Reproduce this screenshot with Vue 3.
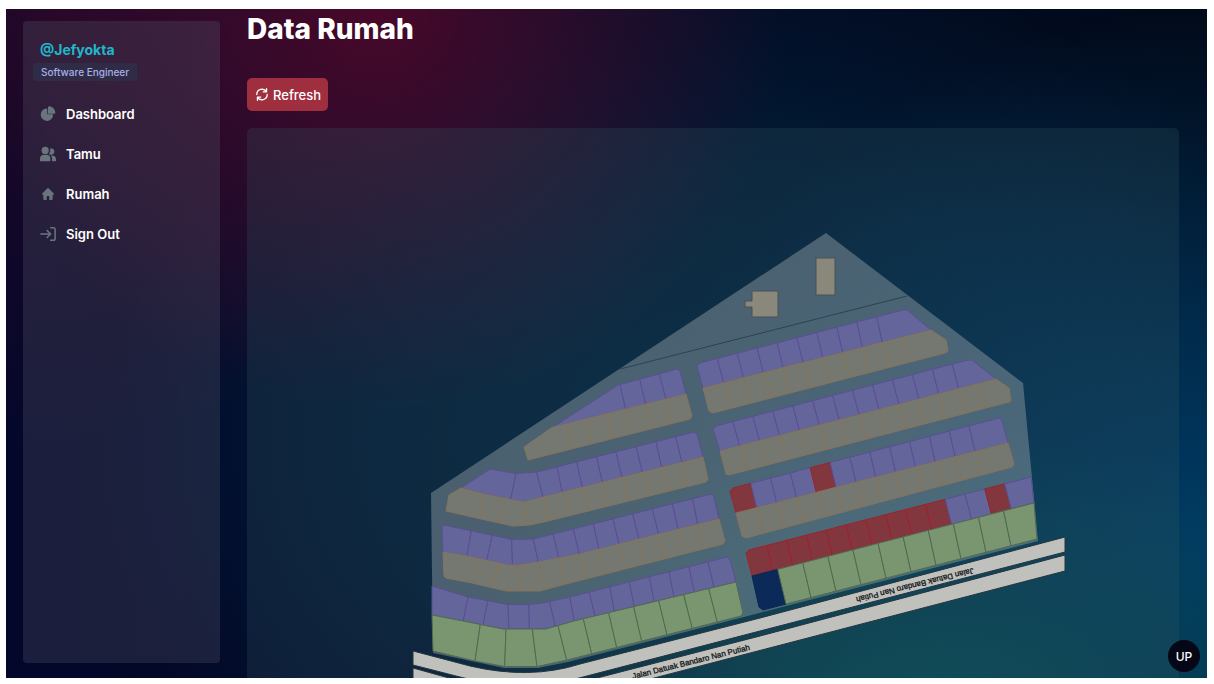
<script setup>
const menu = [
  { label: 'Dashboard', icon: 'pie' },
  { label: 'Tamu', icon: 'users' },
  { label: 'Rumah', icon: 'home' },
  { label: 'Sign Out', icon: 'exit' }
]

const roadName = 'Jalan Datuak Bandaro Nan Putiah'

const series = (start, step, count) => Array.from({ length: count }, (_, i) => start + step * i)

// Each strip is a row of houses between two edges, split at the x positions in cutsA (upper) and cutsB (lower).
const strips = [
  // east blocks
  { kind: 'violet', a: [[697, 366], [700, 363], [903, 310], [907, 310], [931, 330]], b: [[703, 388], [931, 330]], cutsA: series(717.3, 19.93, 9), cutsB: series(723.7, 19.83, 9) },
  { kind: 'sand', a: [[703, 388], [931, 330], [946, 340], [948, 351]], b: [[709, 411], [713, 413], [945, 353], [948, 351]], cutsA: series(724.7, 19.83, 10), cutsB: series(730.7, 19.78, 10) },
  { kind: 'violet', a: [[713, 429], [716, 426], [968, 360], [972, 360], [996, 379]], b: [[720, 451], [996, 379]], cutsA: series(733, 19.94, 12), cutsB: series(739.6, 19.92, 12) },
  { kind: 'sand', a: [[720, 451], [996, 379], [1009, 388], [1011, 401]], b: [[726, 474], [729, 475], [1009, 402], [1011, 401]], cutsA: series(741, 19.8, 13), cutsB: series(747, 19.8, 13) },
  { kind: 'violet', a: [[730, 491], [733, 488], [999, 418], [1002, 420]], b: [[736, 513], [1008, 443]], cutsA: series(750.7, 19.85, 12), cutsB: series(756.7, 19.85, 12), marks: { 0: 'red', 4: 'red' } },
  { kind: 'sand', a: [[736, 513], [1008, 443]], b: [[742, 536], [746, 538], [1012, 467], [1014, 464]], cutsA: series(757.3, 19.88, 12), cutsB: series(764, 19.82, 12) },
  {
    kind: 'violet', a: [[746, 553], [749, 550], [1031, 477]], b: [[752, 576], [1034, 503]], cutsA: series(767, 19.8, 13), cutsB: series(772.7, 19.88, 13),
    marks: { 0: 'red', 1: 'red', 2: 'red', 3: 'red', 4: 'red', 5: 'red', 6: 'red', 7: 'red', 8: 'red', 9: 'red', 12: 'red' }
  },
  { kind: 'green', a: [[752, 576], [1034, 503]], b: [[759, 607], [763, 610], [1037, 539]], cutsA: series(777.7, 25.1, 10), cutsB: series(786, 25, 10), marks: { 0: 'navy' } },
  // west blocks
  { kind: 'violet', a: [[553, 427], [618, 385], [677, 369], [680, 371]], b: [[553, 427.5], [686, 394]], cutsA: [620, 639.7, 659.3], cutsB: [625.7, 645.7, 666] },
  { kind: 'sand', a: [[524, 447], [552, 427.5], [686, 394]], b: [[524, 447], [528, 460], [690, 419], [692, 416]], cutsA: series(566.7, 19.92, 6), cutsB: series(572.3, 19.8, 6) },
  {
    kind: 'violet', a: [[461, 488], [490, 469], [516, 473.5], [537, 472], [694, 432], [697, 434]], b: [[461, 488], [484, 494], [523, 502], [543, 497], [703, 457]],
    cutsA: [516, 536.7, 557, 576.7, 596.7, 616, 636.3, 656, 675.7], cutsB: [510.7, 543, 562.3, 582.3, 602.3, 622, 642.3, 661.7, 682]
  },
  {
    kind: 'sand', a: [[446, 511], [449, 495], [461, 488], [484, 494], [523, 502], [543, 497], [703, 457]], b: [[446, 511], [479, 518.5], [513, 526], [530, 525], [548, 521], [706, 482], [708, 479]],
    cutsA: [484.7, 503.3, 523.3, 543.3, 563.3, 583.3, 603.3, 623.3, 643, 663, 683.3], cutsB: [479.3, 498.7, 529.3, 548, 569, 589, 608.7, 628.7, 648.7, 668.3, 688]
  },
  {
    kind: 'violet', a: [[442, 527], [444, 525], [512, 539.5], [533, 539], [573, 529], [711, 494], [714, 497]], b: [[443, 552], [467, 556], [508, 565], [518, 565], [538, 562], [579, 554], [719, 519]],
    cutsA: [471.3, 492.3, 511.7, 533.3, 553, 573.3, 593.3, 613, 632.7, 652.3, 672.3, 692.7], cutsB: [467, 486.7, 512.5, 538.3, 559, 579.3, 599, 619, 639, 658.7, 678.3, 697.7]
  },
  {
    kind: 'sand', a: [[443, 552], [467, 556], [508, 565], [518, 565], [538, 562], [579, 554], [719, 519]], b: [[444, 576], [446, 578], [472, 583], [506, 591], [540, 591], [566, 584], [723, 544], [725, 541]],
    cutsA: [477.7, 499, 518.3, 538.3, 559, 579.3, 599, 619, 639, 659, 678.7, 698], cutsB: [472.7, 492.7, 519, 545.7, 565.7, 585.3, 605.3, 625, 644.7, 664.3, 684.7, 704]
  },
  {
    kind: 'violet', a: [[432, 586], [468, 597], [508, 604.5], [529, 604.5], [543, 603], [570, 597], [727, 557], [730, 559]], b: [[432, 615], [463, 621], [503, 629], [546, 629], [574, 621], [736, 582]],
    cutsA: [468, 488, 508, 529, 549.7, 569.7, 589.3, 610, 629.3, 649.3, 669, 689, 708], cutsB: [463.3, 483, 509, 529.3, 555.3, 574.3, 595, 614.3, 634.3, 654.3, 674, 694.3, 714]
  },
  {
    kind: 'green', a: [[432, 615], [463, 621], [503, 629], [546, 629], [574, 621], [736, 582]], b: [[433, 651], [475, 661], [505, 666.5], [537, 666.5], [567, 660], [741, 616], [743, 613]],
    cutsA: [480.3, 506, 532.3, 558, 583.3, 608.7, 633.7, 658.7, 683.7, 708.7], cutsB: [475, 504.7, 537, 566.7, 591.7, 616.7, 641.7, 667, 692.3, 717.3]
  }
]

function yAt(edge, x) {
  for (let i = 1; i < edge.length; i++) {
    const [x0, y0] = edge[i - 1]
    const [x1, y1] = edge[i]
    if (x <= x1 && x1 > x0) return y0 + ((y1 - y0) * (x - x0)) / (x1 - x0)
  }
  return edge[edge.length - 1][1]
}

function slice(edge, cuts, i) {
  const inner = edge.filter(([x]) => (i === 0 || x > cuts[i - 1]) && (i === cuts.length || x < cuts[i]))
  const points = [...inner]
  if (i > 0) points.unshift([cuts[i - 1], yAt(edge, cuts[i - 1])])
  if (i < cuts.length) points.push([cuts[i], yAt(edge, cuts[i])])
  return points
}

const houses = strips.flatMap((s, n) =>
  Array.from({ length: s.cutsA.length + 1 }, (_, i) => ({
    id: n + '-' + i,
    kind: s.marks?.[i] ?? s.kind,
    points: [...slice(s.a, s.cutsA, i), ...slice(s.b, s.cutsB, i).reverse()].map((p) => p.join(',')).join(' ')
  }))
)
</script>

<template>
  <div class="page">
    <div class="frame">
      <aside class="sidebar">
        <div class="profile">
          <a class="handle" href="#">@Jefyokta</a>
          <span class="role">Software Engineer</span>
        </div>
        <nav>
          <a v-for="item in menu" :key="item.label" class="item" href="#">
            <svg v-if="item.icon === 'pie'" class="icon" viewBox="0 0 22 21" fill="currentColor">
              <path d="M16.975 11H10V4.025a1 1 0 0 0-1.066-.998 8.500 8.500 0 1 0 9.039 9.039.999.999 0 0 0-1-1.066h.002Z" />
              <path d="M12.500 0c-.157 0-.311.010-.565.027A1 1 0 0 0 11 1.020V10h8.975a1 1 0 0 0 1-.935c.013-.188.028-.374.028-.565A8.510 8.510 0 0 0 12.500 0Z" />
            </svg>
            <svg v-else-if="item.icon === 'users'" class="icon" viewBox="0 0 20 18" fill="currentColor">
              <path d="M14 2a3.963 3.963 0 0 0-1.400.267 6.439 6.439 0 0 1-1.331 6.638A4 4 0 1 0 14 2Zm1 9h-1.264A6.957 6.957 0 0 1 15 15v2a2.970 2.970 0 0 1-.184 1H19a1 1 0 0 0 1-1v-1a5.006 5.006 0 0 0-5-5ZM6.500 9a4.500 4.500 0 1 0 0-9 4.500 4.500 0 0 0 0 9ZM8 10H5a5.006 5.006 0 0 0-5 5v2a1 1 0 0 0 1 1h11a1 1 0 0 0 1-1v-2a5.006 5.006 0 0 0-5-5Z" />
            </svg>
            <svg v-else-if="item.icon === 'home'" class="icon" viewBox="0 0 24 24" fill="currentColor">
              <path d="M11.300 3.300a1 1 0 0 1 1.400 0l8 8A1 1 0 0 1 20 13h-1v6a2 2 0 0 1-2 2h-3v-5a1 1 0 0 0-1-1h-2a1 1 0 0 0-1 1v5H7a2 2 0 0 1-2-2v-6H4a1 1 0 0 1-.7-1.700l8-8Z" />
            </svg>
            <svg v-else class="icon" viewBox="0 0 18 16" fill="none" stroke="currentColor" stroke-width="1.700" stroke-linecap="round" stroke-linejoin="round">
              <path d="M1 8h11m0 0L8 4m4 4-4 4m4-11h3a2 2 0 0 1 2 2v10a2 2 0 0 1-2 2h-3" />
            </svg>
            <span>{{ item.label }}</span>
          </a>
        </nav>
      </aside>

      <main class="main">
        <h1>Data Rumah</h1>
        <button class="refresh" type="button">
          <svg viewBox="0 0 18 20" fill="none" stroke="currentColor" stroke-width="2" stroke-linecap="round" stroke-linejoin="round">
            <path d="M16 1v5h-5M2 19v-5h5m10-4a8 8 0 0 1-14.947 3.970M1 10a8 8 0 0 1 14.947-3.970" />
          </svg>
          Refresh
        </button>
        <section class="panel">
          <svg class="plan" viewBox="247 128 932 584" role="img" aria-label="Denah rumah">
            <polygon class="site" points="826,233 1023,383 1038,541 744,617 568,662 538,668 504,668 433,653 431,493" />
            <path class="boundary" d="M620 369 907 296" />
            <rect class="building" x="816" y="258" width="19" height="37" />
            <path class="building" d="M752 291h26v26h-26v-10h-7v-6h7Z" />
            <polygon v-for="h in houses" :key="h.id" :class="['house', h.kind]" :points="h.points" />
            <path class="road" d="M1065 537 760 618 580 664Q530 680 470 666L413 651V665L460 677Q510 690 540 688L583 677 760 631 1065 552Z" />
            <path class="road" d="M1065 555 760 636 597 678Q530 698 460 681L413 668V683L460 695Q520 712 600 692L658 677 1065 571Z" />
            <text class="road-name" transform="translate(633 679) rotate(-14)">{{ roadName }}</text>
            <text class="road-name" transform="translate(973 568) rotate(166)">{{ roadName }}</text>
          </svg>
        </section>
      </main>

      <button class="up" type="button">UP</button>
    </div>
  </div>
</template>

<style>
body {
  margin: 0;
  background: #fff;
}
</style>

<style scoped>
.page {
  box-sizing: border-box;
  height: 100vh;
  padding: 9px 7px 6px 6px;
  font-family: Inter, 'Liberation Sans', sans-serif;
  color: #fff;
}
.frame {
  position: relative;
  box-sizing: border-box;
  display: flex;
  gap: 27px;
  height: 100%;
  padding: 0 28px 0 17px;
  overflow: hidden;
  background:
    radial-gradient(ellipse 34% 60% at 31% 0%, rgba(76, 8, 42, 0.95), rgba(66, 10, 44, 0.6) 45%, rgba(50, 12, 46, 0) 100%),
    radial-gradient(ellipse 34% 66% at 4% 0%, rgba(52, 8, 38, 0.6), rgba(52, 8, 38, 0) 100%),
    radial-gradient(ellipse 42% 46% at 76% 108%, rgba(8, 80, 88, 0.9), rgba(4, 66, 86, 0) 100%),
    radial-gradient(ellipse 50% 80% at 102% 80%, rgba(0, 64, 108, 0.9), rgba(0, 54, 94, 0) 100%),
    radial-gradient(ellipse 52% 72% at 60% 64%, rgba(0, 36, 64, 0.95), rgba(0, 32, 60, 0.7) 55%, rgba(0, 26, 54, 0) 100%),
    linear-gradient(90deg, #03072a, #030c26 50%, #010a1a);
}
.sidebar {
  box-sizing: border-box;
  flex: 0 0 197px;
  margin: 12px 0 15px;
  padding: 19px 10px 18px;
  border-radius: 4px;
  background: rgba(88, 92, 110, 0.28);
}
.profile {
  display: flex;
  flex-direction: column;
  align-items: flex-start;
}
.handle {
  margin-left: 7px;
  font-size: 14px;
  line-height: 20px;
  font-weight: 700;
  color: #1fb8c9;
  text-decoration: none;
}
.role {
  margin-top: 3px;
  padding: 0 8px;
  border-radius: 3px;
  background: #302c48;
  font-size: 10px;
  line-height: 18px;
  font-weight: 500;
  color: #a9b0e6;
}
nav {
  display: flex;
  flex-direction: column;
  margin-top: 13px;
}
.item {
  display: flex;
  align-items: center;
  gap: 10px;
  height: 40px;
  padding-left: 7px;
  font-size: 13px;
  font-weight: 600;
  color: #fff;
  text-decoration: none;
}
.icon {
  width: 16px;
  height: 16px;
  color: #68757f;
}
.main {
  display: flex;
  flex: 1;
  flex-direction: column;
  align-items: flex-start;
  min-width: 0;
}
h1 {
  margin: 2px 0 0;
  font-size: 28px;
  line-height: 36px;
  font-weight: 800;
}
.refresh {
  display: flex;
  flex-shrink: 0;
  align-items: center;
  gap: 5px;
  height: 33px;
  margin: 31px 0 17px;
  padding: 0 7px 0 9px;
  border: 0;
  border-radius: 5px;
  background: #9f2f3f;
  color: #fff;
  font: 500 13px Inter, 'Liberation Sans', sans-serif;
}
.refresh svg {
  width: 12px;
  height: 13px;
}
.panel {
  width: 100%;
  border-radius: 5px 5px 0 0;
  background: rgba(56, 92, 100, 0.24);
}
.plan {
  display: block;
  width: 100%;
}
.site {
  fill: rgba(136, 150, 158, 0.5);
}
.boundary {
  fill: none;
  stroke: #2c4352;
  stroke-width: 1;
}
.building {
  fill: #89887a;
  stroke: #4b5058;
  stroke-width: 1;
}
.house {
  stroke-width: 1;
  stroke-linejoin: round;
}
.violet {
  fill: #64659a;
  stroke: #5a4f95;
}
.sand {
  fill: #747870;
  stroke: #87735a;
}
.green {
  fill: #799671;
  stroke: #526b50;
}
.red {
  fill: #82373f;
  stroke: #9c232d;
}
.navy {
  fill: #0b2a59;
  stroke: #0b2750;
}
.road {
  fill: #c0c1bc;
  stroke: #24343f;
  stroke-width: 1;
}
.road-name {
  fill: #15181a;
  stroke: #15181a;
  stroke-width: 0.3;
  font-family: 'Liberation Sans', sans-serif;
  font-size: 8px;
}
.up {
  position: absolute;
  right: 7px;
  bottom: 6px;
  width: 32px;
  height: 32px;
  padding: 0;
  border: 0;
  border-radius: 50%;
  background: #050716;
  color: #fff;
  font: 500 12px Inter, 'Liberation Sans', sans-serif;
}
</style>
